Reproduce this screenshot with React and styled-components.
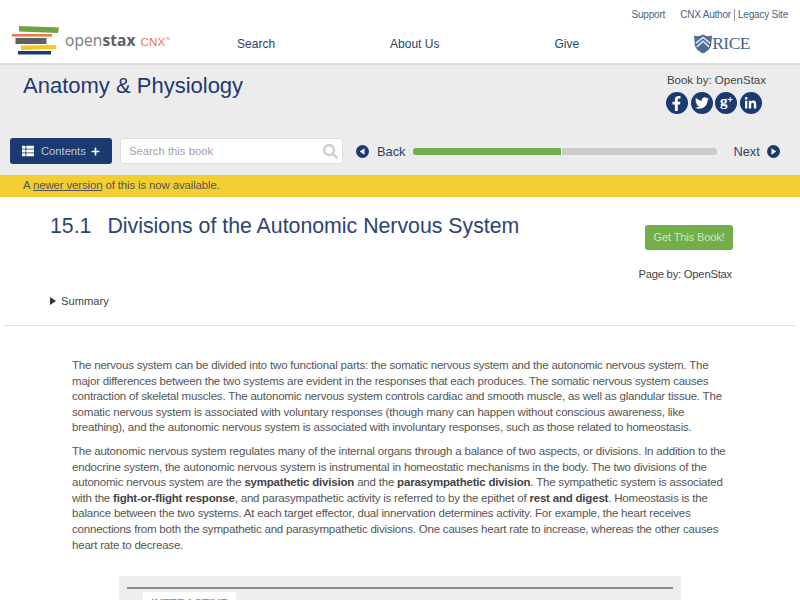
import styled, { createGlobalStyle } from "styled-components";
import { FaFacebookF, FaTwitter, FaLinkedinIn, FaPlus, FaThList, FaSearch } from "react-icons/fa";

const GlobalStyle = createGlobalStyle`
	html, body {
		margin: 0;
		height: 600px;
		overflow: hidden;
		background: #fff;
		font-family: "Liberation Sans", Arial, sans-serif;
		color: #555;
	}
	* {
		box-sizing: border-box;
	}
`;

const Header = styled.header`
	height: 65px;
	display: flex;
	align-items: flex-start;
	justify-content: space-between;
	padding: 26px 12px 0 12px;
	border-bottom: 2px solid #dcdcdc;
	background: #fff;
`;

const Logo = styled.div`
	display: flex;
	align-items: center;
	gap: 6px;
`;

const LogoName = styled.span`
	font-family: "Open Sans", sans-serif;
	font-size: 15.5px;
	color: #7a7a7a;
	letter-spacing: 0.1px;
	margin-top: -1px;
	b {
		font-weight: 700;
		color: #5f6062;
	}
`;

const LogoCnx = styled.span`
	font-family: "Liberation Sans", sans-serif;
	font-size: 11.5px;
	color: #e8754a;
	margin-left: 5px;
	sup {
		font-size: 3px;
		vertical-align: 6px;
	}
`;

const HeaderRight = styled.div`
	display: flex;
	flex-direction: column;
	align-items: flex-end;
	margin-top: -18px;
`;

const TopLinks = styled.div`
	display: flex;
	align-items: center;
	font-size: 10px;
	letter-spacing: -0.2px;
	color: #4a5f85;
	height: 14px;
`;

const TopLink = styled.a`
	padding-left: ${(p) => (p.$sep ? 3 : 0)}px;
	border-left: ${(p) => (p.$sep ? "1px solid #8a94a8" : "none")};
	margin-left: ${(p) => p.$gap || 0}px;
	line-height: 12px;
`;

const Nav = styled.nav`
	display: flex;
	align-items: center;
	gap: 115px;
	margin-top: 11px;
	margin-right: 38px;
`;

const NavLink = styled.a`
	font-size: 12px;
	color: #2b3f6b;
`;

const RiceLogo = styled.div`
	display: flex;
	align-items: center;
	font-family: "Liberation Serif", serif;
	font-size: 17.5px;
	color: #3f6396;
	letter-spacing: -0.5px;
`;

const BookBar = styled.section`
	background: #ececec;
	height: 110px;
	padding: 7px 34px 0 10px;
`;

const BookHead = styled.div`
	display: flex;
	justify-content: space-between;
	height: 66px;
`;

const BookTitle = styled.h1`
	margin: 0 0 0 13px;
	font-size: 22px;
	line-height: 27px;
	font-weight: 400;
	color: #1f3a70;
`;

const BookBy = styled.div`
	display: flex;
	flex-direction: column;
	align-items: flex-start;
	gap: 6px;
	font-size: 11.5px;
	line-height: 12px;
	color: #444;
	padding-top: 2px;
`;

const Socials = styled.div`
	display: flex;
	gap: 2.7px;
	margin-left: -1px;
`;

const Social = styled.span`
	width: 22px;
	height: 22px;
	border-radius: 50%;
	background: #1c3a72;
	color: #fff;
	display: flex;
	align-items: center;
	justify-content: center;
	font-size: ${(p) => p.$size || 13}px;
`;

const GooglePlus = styled.span`
	font-family: "Liberation Serif", serif;
	font-size: 15px;
	font-weight: 700;
	line-height: 15px;
	margin-top: -3px;
	sup {
		font-family: "Liberation Sans", sans-serif;
		font-size: 9px;
		line-height: 0;
		vertical-align: 3px;
	}
`;

const Toolbar = styled.div`
	display: flex;
	align-items: center;
	height: 26px;
	margin-right: -34px;
`;

const ContentsButton = styled.button`
	flex: none;
	width: 102px;
	height: 26px;
	border: 0;
	border-radius: 3px;
	background: #1c3a72;
	color: #bcc6da;
	font: 11.2px "Liberation Sans", sans-serif;
	display: flex;
	align-items: center;
	padding: 0 0 0 12px;
	gap: 7px;
	svg {
		color: #fff;
		flex: none;
	}
	svg:last-child {
		margin-left: -2px;
	}
`;

const SearchBox = styled.div`
	flex: none;
	width: 223px;
	height: 26px;
	margin-left: 8px;
	background: #fff;
	border: 1px solid #dedede;
	border-radius: 3px;
	display: flex;
	align-items: center;
	justify-content: space-between;
	padding: 0 4px 0 8px;
	font-size: 11.3px;
	color: #a3a3a3;
	svg {
		color: #cfcfcf;
	}
`;

const Pager = styled.a`
	flex: none;
	display: flex;
	align-items: center;
	gap: ${(p) => p.$gap}px;
	font-size: 12.8px;
	color: #2b3f6b;
	margin: ${(p) => p.$margin};
`;

const Progress = styled.div`
	flex: none;
	width: 304px;
	height: 7px;
	margin-top: 1px;
	background: #cbcbcb;
	border-radius: 3px;
	overflow: hidden;
`;

const ProgressFill = styled.div`
	height: 100%;
	background: #72ae4a;
	border-right: 1px solid #fff;
`;

const Notice = styled.div`
	height: 22px;
	background: #f2ce33;
	padding-left: 23px;
	font-size: 11.5px;
	letter-spacing: -0.16px;
	line-height: 21px;
	color: #555;
	a {
		color: #555;
		text-decoration: underline;
	}
`;

const PageHead = styled.section`
	display: flex;
	justify-content: space-between;
	padding: 16px 67px 0 50px;
	height: 93px;
`;

const PageTitle = styled.h2`
	margin: 0;
	font-size: 21.3px;
	line-height: 26px;
	font-weight: 400;
	color: #2c4475;
	display: flex;
	gap: 16px;
`;

const PageSide = styled.div`
	display: flex;
	flex-direction: column;
	align-items: flex-end;
	padding-top: 12px;
	gap: 17px;
	font-size: 11.2px;
	letter-spacing: -0.2px;
	line-height: 14px;
	color: #444;
`;

const PageBy = styled.span`
	margin-right: 1px;
`;

const GetButton = styled.a`
	width: 88px;
	height: 25px;
	background: #72ae4a;
	border-radius: 3px;
	color: #cfe6bd;
	font-size: 11.2px;
	line-height: 25px;
	text-align: center;
`;

const Summary = styled.div`
	display: flex;
	align-items: center;
	gap: 5px;
	height: 35px;
	padding: 0 0 13px 50px;
	font-size: 11.2px;
	color: #444;
	&::before {
		content: "";
		border-left: 6px solid #333;
		border-top: 4px solid transparent;
		border-bottom: 4px solid transparent;
	}
`;

const Divider = styled.hr`
	margin: 0 5px 0 4px;
	border: 0;
	border-top: 1px solid #dedede;
`;

const Article = styled.article`
	padding: 32px 72px 0;
`;

const Para = styled.p`
	margin: 0 0 8px;
	font-size: 11.5px;
	letter-spacing: -0.2px;
	line-height: 15.6px;
	color: #555;
	b {
		color: #444;
	}
`;

const Figure = styled.div`
	margin: 23px 47px 0;
	height: 60px;
	background: #ededed;
	padding: 11px 8px 0;
`;

const FigureRule = styled.div`
	height: 2px;
	background: #8c8c8c;
`;

const FigureTab = styled.div`
	width: 93px;
	height: 30px;
	margin: 3px 0 0 16px;
	background: #fff;
	padding: 5px 8px;
	font-size: 11.5px;
	font-weight: 700;
	color: #999;
	white-space: nowrap;
	overflow: hidden;
`;

const App = () => (
	<>
		<GlobalStyle />
		<Header>
			<Logo>
				<svg width="47" height="29" viewBox="0 0 47 29">
					<path d="M7 0 L47 1.5 L46 7 L7 5.5 Z" fill="#6fa142" />
					<rect x="0" y="8" width="40" height="2.6" fill="#ea7a50" />
					<rect x="3.5" y="12" width="31" height="6" fill="#5f6062" />
					<path d="M9 19.5 L44 19 L44 23 L9 24 Z" fill="#f2c91c" />
					<rect x="6" y="25" width="33" height="3.5" fill="#1c3a72" />
				</svg>
				<LogoName>
					open<b>stax</b>
					<LogoCnx>CNX<sup>TM</sup></LogoCnx>
				</LogoName>
			</Logo>
			<HeaderRight>
				<TopLinks>
					<TopLink>Support</TopLink>
					<TopLink $gap={15}>CNX Author</TopLink>
					<TopLink $sep $gap={3}>Legacy Site</TopLink>
				</TopLinks>
				<Nav>
					<NavLink>Search</NavLink>
					<NavLink>About Us</NavLink>
					<NavLink>Give</NavLink>
					<RiceLogo>
						<svg width="18" height="20" viewBox="0 0 19 20">
							<path d="M0 1 Q5 3 9.5 0 Q14 3 19 1 L18 12 Q16 17 9.5 20 Q3 17 1 12 Z" fill="#4f6c96" />
							<path d="M2 9 L9.5 3 L17 9 M3 13 L9.5 7 L16 13" fill="none" stroke="#dfe6ef" strokeWidth="1.6" />
						</svg>
						RICE
					</RiceLogo>
				</Nav>
			</HeaderRight>
		</Header>
		<BookBar>
			<BookHead>
				<BookTitle>Anatomy &amp; Physiology</BookTitle>
				<BookBy>
					Book by: OpenStax
					<Socials>
						<Social $size={15}><FaFacebookF /></Social>
						<Social $size={14}><FaTwitter /></Social>
						<Social><GooglePlus>g<sup>+</sup></GooglePlus></Social>
						<Social $size={13}><FaLinkedinIn /></Social>
					</Socials>
				</BookBy>
			</BookHead>
			<Toolbar>
				<ContentsButton>
					<FaThList size={12} />
					Contents
					<FaPlus size={9} />
				</ContentsButton>
				<SearchBox>
					Search this book
					<FaSearch size={15} />
				</SearchBox>
				<Pager $gap={8} $margin="0 8px 0 13px">
					<svg width="13" height="13" viewBox="0 0 13 13">
						<circle cx="6.5" cy="6.5" r="6.5" fill="#1c3a72" />
						<path d="M8.5 3.2 V9.8 L3.8 6.5 Z" fill="#fff" />
					</svg>
					Back
				</Pager>
				<Progress>
					<ProgressFill style={{ width: "48.8%" }} />
				</Progress>
				<Pager $gap={7} $margin="0 0 0 16px">
					Next
					<svg width="13" height="13" viewBox="0 0 13 13">
						<circle cx="6.5" cy="6.5" r="6.5" fill="#1c3a72" />
						<path d="M4.5 3.2 V9.8 L9.2 6.5 Z" fill="#fff" />
					</svg>
				</Pager>
			</Toolbar>
		</BookBar>
		<Notice>
			A <a>newer version</a> of this is now available.
		</Notice>
		<PageHead>
			<PageTitle>
				<span>15.1</span>
				<span>Divisions of the Autonomic Nervous System</span>
			</PageTitle>
			<PageSide>
				<GetButton>Get This Book!</GetButton>
				<PageBy>Page by: OpenStax</PageBy>
			</PageSide>
		</PageHead>
		<Summary>Summary</Summary>
		<Divider />
		<Article>
			<Para>
				The nervous system can be divided into two functional parts: the somatic nervous system and the autonomic nervous system. The major differences between the two systems are evident in the responses that each produces. The somatic nervous system causes contraction of skeletal muscles. The autonomic nervous system controls cardiac and smooth muscle, as well as glandular tissue. The somatic nervous system is associated with voluntary responses (though many can happen without conscious awareness, like breathing), and the autonomic nervous system is associated with involuntary responses, such as those related to homeostasis.
			</Para>
			<Para>
				The autonomic nervous system regulates many of the internal organs through a balance of two aspects, or divisions. In addition to the endocrine system, the autonomic nervous system is instrumental in homeostatic mechanisms in the body. The two divisions of the autonomic nervous system are the <b>sympathetic division</b> and the <b>parasympathetic division</b>. The sympathetic system is associated with the <b>fight-or-flight response</b>, and parasympathetic activity is referred to by the epithet of <b>rest and digest</b>. Homeostasis is the balance between the two systems. At each target effector, dual innervation determines activity. For example, the heart receives connections from both the sympathetic and parasympathetic divisions. One causes heart rate to increase, whereas the other causes heart rate to decrease.
			</Para>
			<Figure>
				<FigureRule />
				<FigureTab>INTERACTIVE</FigureTab>
			</Figure>
		</Article>
	</>
);

export default App;
